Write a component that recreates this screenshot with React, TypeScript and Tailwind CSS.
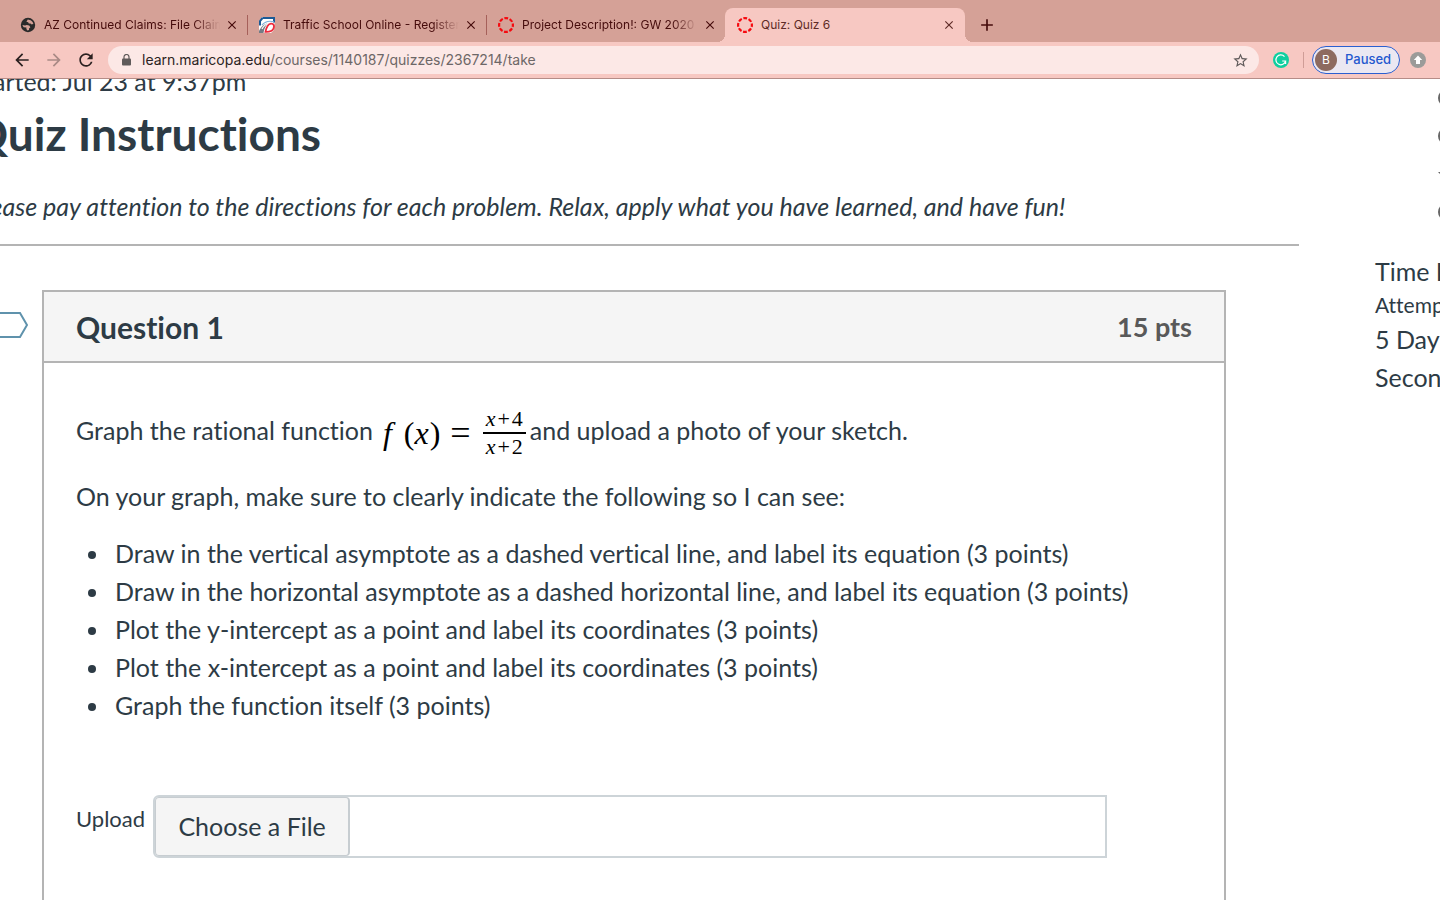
import React from 'react';
import { MdAdd, MdArrowBack, MdArrowForward, MdClose, MdRefresh, MdStarBorder } from 'react-icons/md';

const CanvasIcon = () => (
    <svg width="16" height="16" viewBox="0 0 16 16">
        <circle cx="8" cy="8" r="6.9" fill="none" stroke="#f5090f" strokeWidth="2.2" strokeDasharray="3.8 1.62" strokeDashoffset="1.9" />
    </svg>
);

const GlobeIcon = () => (
    <svg width="16" height="16" viewBox="0 0 16 16">
        <circle cx="8" cy="8" r="7.2" fill="#2a2a2a" />
        <path d="M7.8 2.4L10.600 3.200C12 4 13 5.400 13.400 6.800L11.800 7.600L10.400 6.600H8.800L8.200 5.200L6.400 4.800z" fill="#d5a197" />
        <path d="M2.400 8L5 8.400L6.800 8L9.200 8.600L10.400 10.200L9 11.600V13L7.400 13.600L6.400 12V10.600L3.600 10.200z" fill="#d5a197" />
    </svg>
);

const TrafficIcon = () => (
    <svg width="16" height="16" viewBox="0 0 16 16">
        <path d="M3 0h13l-1 13-3 3H0V4z" fill="#fff" />
        <path d="M3.500 1H15v4.500M1 8.500V4L3.500 1" fill="none" stroke="#1c5a96" strokeWidth="2" />
        <path d="M3 8C6 4.500 10 3.500 15 4.800" fill="none" stroke="#7fb0d8" strokeWidth="1.200" />
        <path d="M0 14C2 10 5 6.500 10 6C6.500 8 5 12 4.500 16H0z" fill="#747b84" />
        <path d="M3 12C4.500 9 7 7 10 6" stroke="#fff" strokeWidth="1.200" fill="none" />
        <path d="M6.500 14.800C7.500 10 9 7 12 6.700C15 6.500 15.500 9 14.500 11.500C13.500 14 11.500 15 6.500 14.800z" fill="#fff" stroke="#ee2a3c" strokeWidth="1.800" />
    </svg>
);

const tabs = [
    { title: 'AZ Continued Claims: File Claim', icon: <GlobeIcon />, divider: true },
    { title: 'Traffic School Online - Register', icon: <TrafficIcon />, divider: true },
    { title: 'Project Description!: GW 2020', icon: <CanvasIcon />, divider: false },
];

const BrowserBar: React.FC = () => (
    <header className="relative z-10 border-b border-[#b58d88] bg-[#f7c8c2] font-['Inter','Liberation_Sans',sans-serif]">
        {/* Tab strip */}
        <div className="flex h-[42px] items-end bg-[#d5a197] pl-2 text-xs text-[#450b0b]">
            {tabs.map((tab) => (
                <div key={tab.title} className="flex h-[34px] w-[239px] items-center pl-3">
                    {tab.icon}
                    <span className="ml-2 w-[176px] overflow-hidden whitespace-nowrap [mask-image:linear-gradient(to_right,#000_85%,transparent)]">{tab.title}</span>
                    <button aria-label="Close tab" className="ml-[5px] shrink-0"><MdClose size={14} /></button>
                    {tab.divider && <span className="-mr-px ml-auto h-5 w-px bg-[#a5605a]" />}
                </div>
            ))}
            <div className="relative flex h-[34px] w-[240px] items-center rounded-t-lg bg-[#f7c8c2] pl-3 text-[#5e2b27] before:absolute before:bottom-0 before:-left-2 before:size-2 before:bg-[radial-gradient(circle_at_0_0,transparent_8px,#f7c8c2_8px)] after:absolute after:-right-2 after:bottom-0 after:size-2 after:bg-[radial-gradient(circle_at_100%_0,transparent_8px,#f7c8c2_8px)]">
                <CanvasIcon />
                <span className="ml-2 flex-1">Quiz: Quiz 6</span>
                <button aria-label="Close tab" className="mr-[9px]"><MdClose size={14} /></button>
            </div>
            <button aria-label="New tab" className="ml-3 flex h-[34px] items-center"><MdAdd size={20} /></button>
        </div>

        {/* Toolbar */}
        <div className="flex h-9 items-center pl-3 pr-[14px]">
            <button aria-label="Back"><MdArrowBack size={20} color="#2b2020" /></button>
            <button aria-label="Forward" className="ml-3"><MdArrowForward size={20} color="#a98a86" /></button>
            <button aria-label="Reload" className="ml-3"><MdRefresh size={20} color="#2b2020" /></button>
            <div className="ml-3 flex h-7 flex-1 items-center rounded-full bg-[#fce8e6] pl-[14px] pr-[10px]">
                <svg width="9" height="12" viewBox="0 0 9 12">
                    <rect y="4.500" width="9" height="7" rx="1" fill="#5f5a5a" />
                    <path d="M2 5V3a2.500 2.500 0 0 1 5 0v2" fill="none" stroke="#5f5a5a" strokeWidth="1.200" />
                </svg>
                <span className="ml-[11px] flex-1 text-sm text-[#6d6767]">
                    <span className="text-[#2b2323]">learn.maricopa.edu</span>/courses/1140187/quizzes/2367214/take
                </span>
                <button aria-label="Bookmark"><MdStarBorder size={17} color="#5f5a5a" /></button>
            </div>
            <svg className="ml-[14px]" width="16" height="16" viewBox="0 0 16 16">
                <circle cx="8" cy="8" r="8" fill="#0fcf9f" />
                <path d="M11.500 4.600A4.900 4.900 0 1 0 12.600 9H9.200M12.600 9v3" fill="none" stroke="#fff" strokeWidth="1.200" />
            </svg>
            <span className="ml-[14px] h-4 w-px bg-[#cf9d97]" />
            <button className="ml-2 flex h-7 w-[88px] items-center rounded-full border border-[#2b5fd0] bg-[#ebe8f2] pl-[2px] text-[13px] font-medium text-[#2459cf]">
                <span className="mr-2 flex h-[22px] w-[22px] items-center justify-center rounded-full bg-[#8d6a5f] text-xs font-normal text-white">B</span>
                Paused
            </button>
            <svg className="ml-[10px]" width="16" height="16" viewBox="0 0 16 16">
                <circle cx="8" cy="8" r="8" fill="#9b9b99" />
                <path d="M8 3.500L12.200 8H10v4H6V8H3.800z" fill="#fff" />
            </svg>
        </div>
    </header>
);

const Formula: React.FC = () => (
    <span className="ml-[10px] mr-1 inline-flex items-center pt-[6px] font-['Liberation_Serif',serif] text-[32px] leading-8 text-black">
        <i>f</i>
        <span className="ml-3">(</span>
        <i>x</i>
        <span className="ml-px">)</span>
        <span className="ml-[10px] mr-3 text-[36px]">=</span>
        <span className="flex flex-col text-center text-[22px] leading-[26px]">
            <span className="border-b-2 border-black px-[3px]"><i>x</i><span className="mx-[2px]">+</span>4</span>
            <span><i>x</i><span className="mx-[2px]">+</span>2</span>
        </span>
    </span>
);

const steps = [
    'Draw in the vertical asymptote as a dashed vertical line, and label its equation (3 points)',
    'Draw in the horizontal asymptote as a dashed horizontal line, and label its equation (3 points)',
    'Plot the y-intercept as a point and label its coordinates (3 points)',
    'Plot the x-intercept as a point and label its coordinates (3 points)',
    'Graph the function itself (3 points)',
];

const Question: React.FC = () => (
    <section className="mr-[73px] min-h-[700px] flex-1 border-2 border-[#b4b4b4]">
        <div className="flex h-[71px] items-center justify-between border-b-2 border-[#b4b4b4] bg-[#f5f5f5] px-8 font-bold">
            <h2 className="text-[30px]">Question 1</h2>
            <span className="text-[27px] text-[#595959]">15 pts</span>
        </div>
        <div className="px-8 pt-[38px]">
            <p className="flex h-[58px] items-center whitespace-nowrap">
                Graph the rational function <Formula />and upload a photo of your sketch.
            </p>
            <p className="mt-[18px]">On your graph, make sure to clearly indicate the following so I can see:</p>
            <ul className="mt-[19px] pl-3">
                {steps.map((step) => (
                    <li key={step} className="flex items-center before:mt-1 before:mr-[19px] before:size-2 before:shrink-0 before:rounded-full before:bg-current">{step}</li>
                ))}
            </ul>
            <div className="mt-[71px] mr-[85px] flex">
                <label htmlFor="answer-file" className="mr-2 pt-[5px] text-[22px]">Upload</label>
                <div className="flex h-[63px] flex-1 rounded-l-md border-2 border-[#cdd4d8]">
                    <button className="w-[195px] shrink-0 rounded border border-r-2 border-[#c7cdd1] bg-[#f5f5f5] pb-[2px]">Choose a File</button>
                    <input id="answer-file" type="text" readOnly className="min-w-0 flex-1 outline-none" />
                </div>
            </div>
        </div>
    </section>
);

const Sidebar: React.FC = () => (
    <aside className="w-[65px] shrink-0 whitespace-nowrap">
        <ul className="ml-[62px] flex flex-col text-[#666]">
            {[0, 1, 2, 3].map((n) => (
                <li key={n} className="flex h-[38px] items-center">
                    <svg className="shrink-0" width="20" height="20" viewBox="0 0 20 20">
                        {n === 2
                            ? <path d="M1 8h8v3H4z" fill="currentColor" />
                            : <circle cx="9.500" cy="10" r="7.500" fill="none" stroke="currentColor" strokeWidth="2" />}
                    </svg>
                </li>
            ))}
        </ul>
        <div className="mt-[21px]">
            <p>Time Elapsed:</p>
            <p className="text-[21px] leading-[30px]">Attempt due</p>
            <p>5 Days,</p>
            <p>Seconds</p>
        </div>
    </aside>
);

export default function App() {
    return (
        <div className="h-screen overflow-hidden bg-white text-[#2d3b45]">
            <BrowserBar />
            <main className="-ml-[29px] flex font-['Lato',sans-serif] text-[25px] leading-[38px] [font-variant-ligatures:none]">
                <article className="mr-[76px] -mt-[17px] flex-1">
                    <p>Started: Jul 23 at 9:37pm</p>
                    <h1 className="mt-1 text-[46px] font-bold leading-[60px]">Quiz Instructions</h1>
                    <p className="mt-[23px] italic">Please pay attention to the directions for each problem. Relax, apply what you have learned, and have fun!</p>
                    <hr className="mt-[19px] border-t-2 border-[#b4b4b4]" />
                    <div className="mt-11 flex">
                        <button aria-label="Flag question" className="mt-[21px] mr-[14px] self-start">
                            <svg className="block" width="57" height="28" viewBox="0 0 57 28">
                                <path d="M0 2h49l7 12-7 12H0" fill="none" stroke="#5f92ac" strokeWidth="2" />
                            </svg>
                        </button>
                        <Question />
                    </div>
                </article>
                <Sidebar />
            </main>
        </div>
    );
}
